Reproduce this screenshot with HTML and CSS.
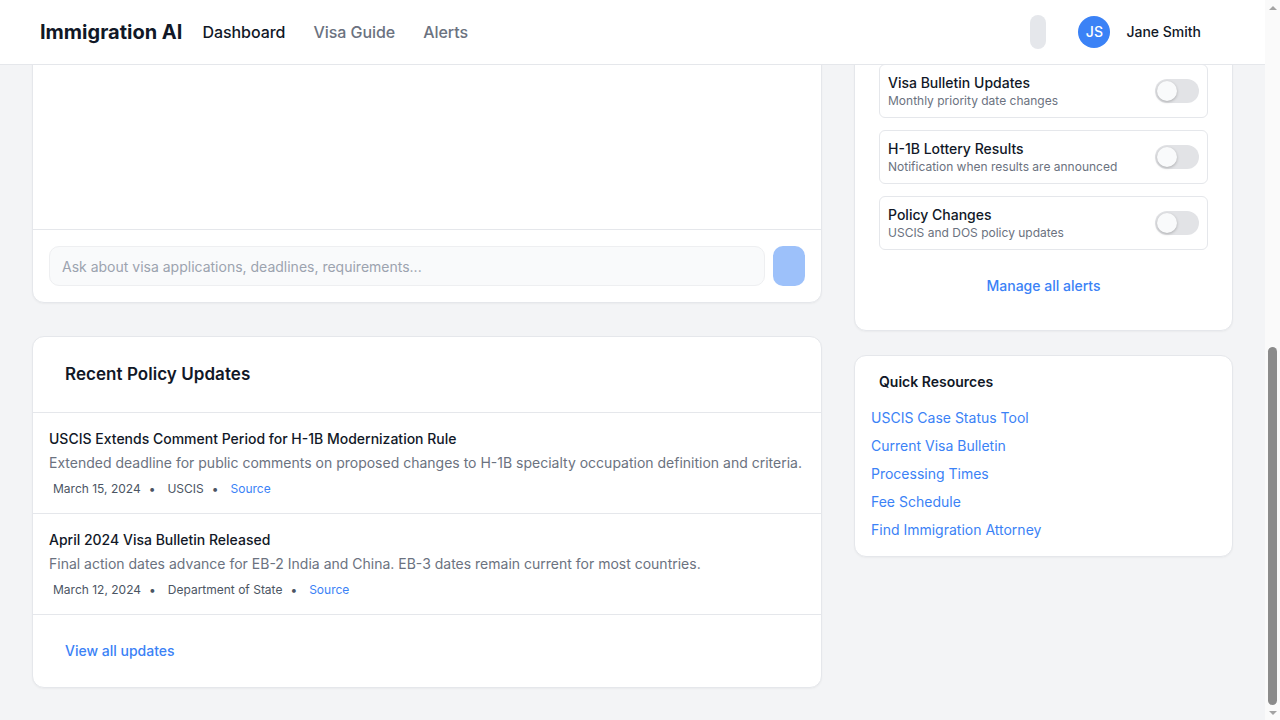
FILE: index.html
```html
<!DOCTYPE html>
<html lang="en">
<head>
<meta charset="utf-8">
<title>Immigration AI – Dashboard</title>
<link rel="stylesheet" href="styles.css">
</head>
<body>
<div class="app">
  <header class="topbar">
    <div class="topbar-left">
      <div class="brand">Immigration AI</div>
      <nav class="nav">
        <a class="nav-link active" href="#">Dashboard</a>
        <a class="nav-link" href="#">Visa Guide</a>
        <a class="nav-link" href="#">Alerts</a>
      </nav>
    </div>
    <div class="topbar-right">
      <button class="icon-btn" aria-label="Notifications"></button>
      <div class="user">
        <span class="avatar">JS</span>
        <span class="user-name">Jane Smith</span>
      </div>
    </div>
  </header>

  <div class="scroll-area">
    <main class="layout">
      <section class="col-main">
        <div class="card chat-card">
          <div class="chat-head">
            <h2 class="chat-title">AI Immigration Assistant</h2>
            <p class="chat-sub">Ask questions about visas, green cards and deadlines</p>
          </div>
          <div class="chat-body">
            <div class="bubble">Hello Jane! I can help you with visa applications, deadlines and requirements. What would you like to know?</div>
          </div>
          <div class="chat-input-row">
            <input class="chat-input" type="text" placeholder="Ask about visa applications, deadlines, requirements...">
            <button class="send-btn" aria-label="Send"></button>
          </div>
        </div>

        <div class="card updates-card">
          <div class="card-head">
            <h2 class="card-title">Recent Policy Updates</h2>
          </div>
          <div class="update">
            <h3 class="update-title">USCIS Extends Comment Period for H-1B Modernization Rule</h3>
            <p class="update-desc">Extended deadline for public comments on proposed changes to H-1B specialty occupation definition and criteria.</p>
            <div class="update-meta">
              <span class="meta-item">March 15, 2024</span>
              <span class="meta-dot">•</span>
              <span class="meta-item">USCIS</span>
              <span class="meta-dot">•</span>
              <a class="meta-item meta-link" href="#">Source</a>
            </div>
          </div>
          <div class="update">
            <h3 class="update-title">April 2024 Visa Bulletin Released</h3>
            <p class="update-desc">Final action dates advance for EB-2 India and China. EB-3 dates remain current for most countries.</p>
            <div class="update-meta">
              <span class="meta-item">March 12, 2024</span>
              <span class="meta-dot">•</span>
              <span class="meta-item">Department of State</span>
              <span class="meta-dot">•</span>
              <a class="meta-item meta-link" href="#">Source</a>
            </div>
          </div>
          <div class="card-foot">
            <a class="link-strong" href="#">View all updates</a>
          </div>
        </div>
      </section>

      <aside class="col-side">
        <div class="card status-card">
          <h3 class="side-title">Case Status</h3>
          <p class="side-sub">H-1B Petition · Receipt WAC2490012345</p>
        </div>

        <div class="card alerts-card">
          <div class="alerts-head">
            <h3 class="alerts-title">Alert Preferences</h3>
            <p class="alerts-sub">Choose what you want to be notified about</p>
          </div>
          <div class="alert-list">
            <div class="alert-item">
              <div><div class="alert-name">Case Status Changes</div><div class="alert-desc">Updates on your pending cases</div></div>
              <span class="toggle"></span>
            </div>
            <div class="alert-item">
              <div><div class="alert-name">Deadline Reminders</div><div class="alert-desc">Upcoming filing deadlines</div></div>
              <span class="toggle"></span>
            </div>
            <div class="alert-item">
              <div><div class="alert-name">Document Expiration</div><div class="alert-desc">Passport and visa expiry</div></div>
              <span class="toggle"></span>
            </div>
            <div class="alert-item">
              <div><div class="alert-name">Visa Bulletin Updates</div><div class="alert-desc">Monthly priority date changes</div></div>
              <span class="toggle"></span>
            </div>
            <div class="alert-item">
              <div><div class="alert-name">H-1B Lottery Results</div><div class="alert-desc">Notification when results are announced</div></div>
              <span class="toggle"></span>
            </div>
            <div class="alert-item">
              <div><div class="alert-name">Policy Changes</div><div class="alert-desc">USCIS and DOS policy updates</div></div>
              <span class="toggle"></span>
            </div>
          </div>
          <div class="alerts-foot">
            <a class="link-strong" href="#">Manage all alerts</a>
          </div>
        </div>

        <div class="card resources-card">
          <h3 class="resources-title">Quick Resources</h3>
          <ul class="resource-list">
            <li><a class="resource-link" href="#">USCIS Case Status Tool</a></li>
            <li><a class="resource-link" href="#">Current Visa Bulletin</a></li>
            <li><a class="resource-link" href="#">Processing Times</a></li>
            <li><a class="resource-link" href="#">Fee Schedule</a></li>
            <li><a class="resource-link" href="#">Find Immigration Attorney</a></li>
          </ul>
        </div>
      </aside>
    </main>
  </div>
</div>

<div class="scrollbar" aria-hidden="true">
  <div class="sb-arrow sb-up"></div>
  <div class="sb-track"><div class="sb-thumb"></div></div>
  <div class="sb-arrow sb-down"></div>
</div>
</body>
</html>
```

FILE: styles.css
```css
* { box-sizing: border-box; }

html, body { margin: 0; padding: 0; }

body {
  height: 720px;
  overflow: hidden;
  display: flex;
  font-family: Inter, "Noto Sans", "Liberation Sans", sans-serif;
  background: #f3f4f6;
  color: #111827;
}

a { text-decoration: none; }

h1, h2, h3, p { margin: 0; }

.app {
  flex: 1;
  min-width: 0;
  height: 720px;
  display: flex;
  flex-direction: column;
}

/* ---------- Top bar ---------- */
.topbar {
  flex: none;
  height: 65px;
  background: #ffffff;
  border-bottom: 1px solid #e5e7eb;
  display: flex;
  align-items: center;
  justify-content: space-between;
  padding: 0 40px 1px;
}

.topbar-left {
  display: flex;
  align-items: center;
}

.brand {
  font-size: 20px;
  font-weight: 700;
  line-height: 28px;
  color: #111827;
}

.nav {
  display: flex;
  align-items: center;
  gap: 28px;
  margin-left: 20px;
}

.nav-link {
  font-size: 16px;
  font-weight: 500;
  line-height: 24px;
  letter-spacing: -0.05px;
  color: #6b7280;
}

.nav-link.active { color: #111827; }

.topbar-right {
  display: flex;
  align-items: center;
  gap: 8px;
}

.icon-btn {
  width: 16px;
  height: 34px;
  padding: 0;
  border: none;
  border-radius: 8px;
  background: #e5e7eb;
}

.user {
  display: flex;
  align-items: center;
  gap: 16px;
  padding: 0 24px;
}

.avatar {
  width: 32px;
  height: 32px;
  border-radius: 50%;
  background: #3b82f6;
  color: #ffffff;
  font-size: 14px;
  font-weight: 500;
  display: flex;
  align-items: center;
  justify-content: center;
}

.user-name {
  font-size: 14px;
  font-weight: 500;
  color: #111827;
}

/* ---------- Scrolled content area ---------- */
.scroll-area {
  flex: 1;
  min-height: 0;
  overflow: hidden;
  display: flex;
  flex-direction: column;
  justify-content: flex-end;
}

.layout {
  flex: none;
  display: grid;
  grid-template-columns: repeat(3, 1fr);
  gap: 32px;
  padding: 32px;
  align-items: start;
}

.col-main {
  grid-column: span 2;
  display: flex;
  flex-direction: column;
  gap: 33px;
}

.col-side {
  display: flex;
  flex-direction: column;
  gap: 24px;
}

.card {
  background: #ffffff;
  border: 1px solid #e5e7eb;
  border-radius: 12px;
  box-shadow: 0 1px 2px rgba(0, 0, 0, 0.04);
}

/* ---------- Chat ---------- */
.chat-card {
  height: 876px;
  display: flex;
  flex-direction: column;
}

.chat-head {
  padding: 20px 24px;
  border-bottom: 1px solid #e5e7eb;
}

.chat-title { font-size: 17px; font-weight: 600; line-height: 28px; }
.chat-sub { font-size: 14px; color: #6b7280; line-height: 20px; }

.chat-body {
  flex: 1;
  padding: 16px;
}

.bubble {
  max-width: 70%;
  padding: 12px 16px;
  background: #f3f4f6;
  border-radius: 12px;
  font-size: 14px;
  line-height: 20px;
  color: #374151;
}

.chat-input-row {
  display: flex;
  gap: 8px;
  padding: 16px;
  border-top: 1px solid #e5e7eb;
}

.chat-input {
  flex: 1;
  height: 40px;
  padding: 0 12px;
  font-family: inherit;
  font-size: 14px;
  color: #111827;
  background: #f9fafb;
  border: 1px solid #eeeff1;
  border-radius: 10px;
  outline: none;
}

.chat-input::placeholder { color: #9ca3af; }

.send-btn {
  width: 32px;
  height: 40px;
  padding: 0;
  border: none;
  border-radius: 10px;
  background: #9dc1fa;
}

/* ---------- Updates ---------- */
.updates-card { overflow: hidden; }

.card-head {
  padding: 24px 32px;
  border-bottom: 1px solid #e5e7eb;
}

.card-title {
  font-size: 17px;
  font-weight: 600;
  line-height: 27px;
  letter-spacing: 0.05px;
}

.update {
  padding: 16px;
  border-bottom: 1px solid #e5e7eb;
}

.update-title {
  font-size: 14px;
  font-weight: 500;
  line-height: 20px;
  color: #111827;
}

.update-desc {
  margin-top: 4px;
  font-size: 14px;
  line-height: 20px;
  color: #6b7280;
}

.update-meta {
  margin-top: 8px;
  display: flex;
  align-items: center;
  font-size: 12px;
  line-height: 16px;
  color: #4b5563;
}

.meta-item { margin: 0 4px; }
.meta-dot { margin: 0 8px 0 4px; }
.meta-link { color: #3b82f6; }

.card-foot { padding: 24px 32px; }

.link-strong {
  font-size: 14px;
  font-weight: 500;
  line-height: 24px;
  color: #3b82f6;
}

/* ---------- Side ---------- */
.status-card {
  height: 326px;
  padding: 24px;
}

.side-title { font-size: 17px; font-weight: 600; line-height: 28px; }
.side-sub { font-size: 14px; line-height: 20px; color: #6b7280; }

.alerts-card { padding: 24px 24px 32px; }

.alerts-head { margin-bottom: 16px; }
.alerts-title { font-size: 17px; font-weight: 600; line-height: 28px; }
.alerts-sub { font-size: 14px; line-height: 20px; color: #6b7280; }

.alert-list {
  display: flex;
  flex-direction: column;
  gap: 12px;
}

.alert-item {
  display: flex;
  align-items: center;
  justify-content: space-between;
  height: 54px;
  padding: 0 8px;
  border: 1px solid #e5e7eb;
  border-radius: 6px;
}

.alert-name {
  font-size: 14px;
  font-weight: 500;
  line-height: 20px;
  color: #111827;
}

.alert-desc {
  font-size: 12px;
  line-height: 16px;
  color: #6b7280;
}

.toggle {
  position: relative;
  flex: none;
  width: 44px;
  height: 24px;
  border-radius: 12px;
  background: #e2e3e6;
}

.toggle::after {
  content: "";
  position: absolute;
  left: 2px;
  top: 2px;
  width: 20px;
  height: 20px;
  border-radius: 50%;
  background: #f9fafb;
  box-shadow: 0 1px 3px rgba(0, 0, 0, 0.25);
}

.alerts-foot {
  margin-top: 24px;
  text-align: center;
}

.resources-card { padding: 16px 16px 12px; }

.resources-title {
  margin: 0 8px;
  font-size: 14px;
  font-weight: 600;
  line-height: 20px;
}

.resource-list {
  list-style: none;
  margin: 12px 0 0;
  padding: 0;
}

.resource-link {
  display: block;
  font-size: 14px;
  line-height: 28px;
  color: #3b82f6;
}

/* ---------- Window scrollbar (classic) ---------- */
.scrollbar {
  flex: none;
  width: 15px;
  height: 720px;
  background: #fafafa;
  display: flex;
  flex-direction: column;
}

.sb-arrow {
  flex: none;
  height: 15px;
  display: flex;
  align-items: center;
  justify-content: center;
}

.sb-up::before,
.sb-down::before {
  content: "";
  width: 0;
  height: 0;
  border-left: 4px solid transparent;
  border-right: 4px solid transparent;
}

.sb-up::before { border-bottom: 4px solid #a3a3a3; }
.sb-down::before { border-top: 4px solid #a3a3a3; }

.sb-track {
  flex: 1;
  display: flex;
  flex-direction: column;
  justify-content: flex-end;
}

.sb-thumb {
  height: 358px;
  margin: 0 3px;
  border-radius: 5px;
  background: #8b8b8b;
}
```
